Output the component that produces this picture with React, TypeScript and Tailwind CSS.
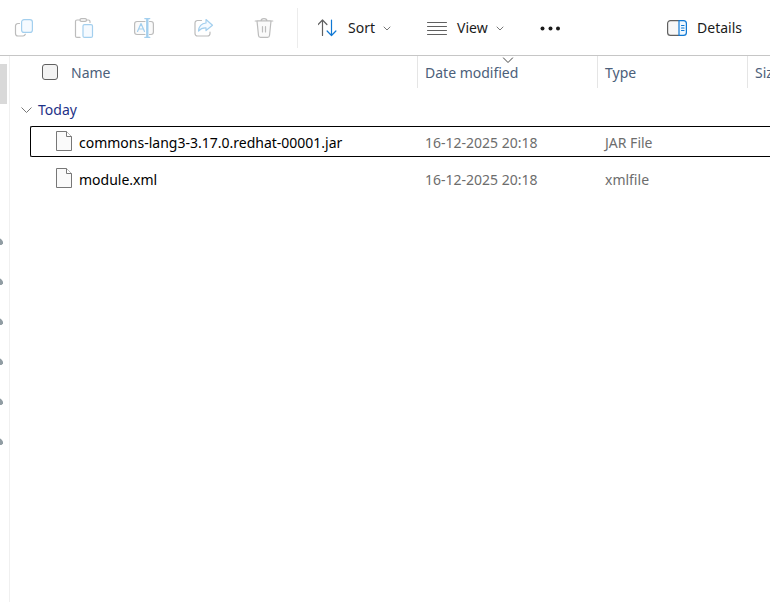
import type { ReactNode } from "react";

const rows = [
  { name: "commons-lang3-3.17.0.redhat-00001.jar", date: "16-12-2025 20:18", type: "JAR File", focused: true },
  { name: "module.xml", date: "16-12-2025 20:18", type: "xmlfile", focused: false },
];

const pins = [1, 2, 3, 4, 5, 6];

function Icon({ children }: { children: ReactNode }) {
  return (
    <svg width="20" height="20" viewBox="0 0 20 20" fill="none" strokeWidth="1.2" strokeLinecap="round" strokeLinejoin="round" className="shrink-0" aria-hidden="true">
      {children}
    </svg>
  );
}

function Chevron({ className }: { className: string }) {
  return (
    <svg width="8" height="5" viewBox="0 0 8 5" fill="none" stroke="currentColor" strokeLinecap="round" className={className} aria-hidden="true">
      <path d="M1 1l3 3 3-3" />
    </svg>
  );
}

function WideChevron({ className }: { className: string }) {
  return (
    <svg width="11" height="6" viewBox="0 0 11 6" fill="none" stroke="currentColor" className={className} aria-hidden="true">
      <path d="M.5 .5l5 5 5-5" />
    </svg>
  );
}

function ToolButton({ label, children }: { label: string; children: ReactNode }) {
  return (
    <button type="button" aria-label={label} disabled className="flex h-8 w-8 items-center justify-center">
      <Icon>{children}</Icon>
    </button>
  );
}

function Toolbar() {
  return (
    <header className="flex h-14 items-center border-b border-[#c6c6c6] pl-2 pr-7 pt-px text-[#1b1b1b]">
      <div className="flex shrink-0 gap-7">
        <ToolButton label="Copy">
          <path stroke="#bcbcbc" d="M5.500 5.500H4a2.500 2.500 0 0 0-2.500 2.500v7.500A2.500 2.500 0 0 0 4 18h5a2.500 2.500 0 0 0 2.300-1.700" />
          <rect stroke="#a3cfee" fill="#f5faff" x="7.600" y="1.600" width="10.800" height="12.800" rx="2.500" />
        </ToolButton>
        <ToolButton label="Paste">
          <path stroke="#bcbcbc" d="M6 19.400H3A1.500 1.500 0 0 1 1.500 17.900V3.500A1.500 1.500 0 0 1 3 2h3M12.500 2h2A1.500 1.500 0 0 1 16 3.500v1" />
          <rect stroke="#bcbcbc" x="6" y="0.700" width="6.500" height="2.600" rx="1.300" />
          <rect stroke="#a3cfee" fill="#f5faff" x="9" y="6.600" width="9.500" height="12.800" rx="1.500" />
        </ToolButton>
        <ToolButton label="Rename">
          <path stroke="#bcbcbc" fill="#fafafa" d="M11 3.500H3A2.500 2.500 0 0 0 .6 6v8A2.500 2.500 0 0 0 3 16.500h8M15.500 3.500H17A2.500 2.500 0 0 1 19.400 6v8a2.500 2.500 0 0 1-2.400 2.500h-1.500" />
          <path stroke="#a3cfee" d="M3.500 13.500L7 5.500l3.500 8M4.700 11h4.600M10.800.600h5M10.800 19.400h5M12.700.600v18.800M13.900.600v18.800" />
        </ToolButton>
        <ToolButton label="Share">
          <path stroke="#bcbcbc" d="M7.500 2.500H3.500A2.500 2.500 0 0 0 1 5v10.500a2.500 2.500 0 0 0 2.500 2.500h10A2.500 2.500 0 0 0 16 15.500V14" />
          <path stroke="#a3cfee" fill="#f5faff" d="M12 1.500l6.500 5.700L12 12.500V9.800c-3.200-.2-5.500.8-7.500 3.200.4-4.800 3-7.600 7.500-8z" />
        </ToolButton>
        <ToolButton label="Delete">
          <path stroke="#bcbcbc" d="M1.200 3h17.600M7 3a3 2.300 0 0 1 6 0" />
          <path stroke="#bcbcbc" fill="#fafafa" d="M3 3l1.500 14.500A2 2 0 0 0 6.500 19.400h7a2 2 0 0 0 2-1.900L17 3z" />
          <path stroke="#bcbcbc" d="M8.500 8.500v5.500M11.500 8.500v5.500" />
        </ToolButton>
      </div>
      <div className="ml-[17px] h-10 w-px shrink-0 bg-[#ececec]" />
      <button type="button" className="ml-5 flex shrink-0 items-center">
        <Icon>
          <path stroke="#606060" d="M4.500 17.500v-15M.1 6.500L4.500 2l4.400 4.500" />
          <path stroke="#0f78d4" d="M13.500 2v15M9.100 13l4.400 4.500 4.400-4.500" />
        </Icon>
        <span className="ml-2.5">Sort</span>
        <Chevron className="ml-2 text-[#777777]" />
      </button>
      <button type="button" className="ml-9 flex shrink-0 items-center">
        <Icon>
          <path stroke="#606060" strokeWidth="1" d="M.5 4.500h19M.5 8.500h19M.5 12.500h19M.5 16.500h19" />
        </Icon>
        <span className="ml-2.5">View</span>
        <Chevron className="ml-2 text-[#777777]" />
      </button>
      <button type="button" aria-label="See more" className="ml-9 flex shrink-0 items-center">
        <Icon>
          <g fill="#1b1b1b">
            <circle cx="2.500" cy="10.500" r="2" />
            <circle cx="10.500" cy="10.500" r="2" />
            <circle cx="18" cy="10.500" r="2" />
          </g>
        </Icon>
      </button>
      <button type="button" className="ml-auto flex shrink-0 items-center gap-2.5">
        <Icon>
          <path stroke="#606060" fill="#f7f7f7" d="M12 2.600H3.500A2.900 2.900 0 0 0 .6 5.500v9a2.900 2.900 0 0 0 2.900 2.900H12" />
          <path stroke="#0f78d4" fill="#eff8ff" d="M12 2.600h4.500a2.900 2.900 0 0 1 2.900 2.900v9a2.900 2.900 0 0 1-2.900 2.900H12z" />
          <path stroke="#0f78d4" d="M14.500 7.500h2.500M14.500 10h2.500M14.500 12.500h2.500" />
        </Icon>
        <span>Details</span>
      </button>
    </header>
  );
}

function FileIcon() {
  return (
    <svg width="18" height="22" viewBox="0 -1 18 22" fill="#fafafa" stroke="#777777" className="shrink-0 self-start" aria-hidden="true">
      <path d="M1.500 1.500h10l5 5v14h-15z" />
      <path d="M11.500 1.500v5h5" fill="#ffffff" />
    </svg>
  );
}

export default function App() {
  return (
    <div className="flex min-h-screen flex-col overflow-hidden bg-white font-['Noto_Sans','Open_Sans',sans-serif] text-[14px] leading-5">
      <Toolbar />
      <div className="flex grow">
        <aside className="w-2.5 shrink-0 overflow-hidden border-r border-[#f0f0f0] pt-2">
          <div className="h-10 w-[7px] bg-[#d9d9d9]" />
          <div className="mt-[118px] flex flex-col">
            {pins.map((pin) => (
              <div key={pin} className="flex h-10 items-center">
                <svg width="4" height="8" viewBox="0 0 4 8" fill="#919da3" aria-hidden="true">
                  <path d="M0 .5l1 .5 2 2.500v2L1.500 7H0z" />
                </svg>
              </div>
            ))}
          </div>
        </aside>
        <main className="min-w-0 grow overflow-hidden">
          <table className="block">
            <thead className="block">
              <tr className="grid h-8 grid-cols-[408px_180px_150px_1fr] text-left text-[#4c607a] *:font-normal">
                <th className="flex items-center gap-[13px] border-r border-[#e5e5e5] pl-8">
                  <input type="checkbox" aria-label="Select all" className="h-4 w-4 appearance-none rounded-[3px] border border-[#606060] bg-[#f3f3f3]" />
                  <span className="pt-0.5">Name</span>
                </th>
                <th className="relative flex items-center border-r border-[#e5e5e5] pl-[7px] pt-0.5">
                  <WideChevron className="absolute left-1/2 top-px -translate-x-1/2 text-[#444444]" />
                  Date modified
                </th>
                <th className="flex items-center border-r border-[#e5e5e5] pl-[7px] pt-0.5">Type</th>
                <th className="flex items-center pl-[7px] pt-0.5">Size</th>
              </tr>
            </thead>
            <tbody className="block pt-2">
              <tr className="block">
                <th className="block text-left font-normal">
                  <button type="button" className="flex h-7 items-center gap-1.5 pl-[11px] text-[#1e3287]">
                    <WideChevron className="text-[#777777]" />
                    Today
                  </button>
                </th>
              </tr>
              {rows.map((row) => (
                <tr
                  key={row.name}
                  className={`mb-1.5 ml-5 grid h-[31px] grid-cols-[387px_180px_150px_1fr] rounded-l-[2px] border border-r-0 text-[#6d6d6d] ${row.focused ? "mt-0.5 border-black" : "border-transparent"}`}
                >
                  <td className="flex items-center gap-1.5 pl-6 pt-0.5 text-black">
                    <FileIcon />
                    {row.name}
                  </td>
                  <td className="flex items-center pl-[7px] pt-0.5">{row.date}</td>
                  <td className="flex items-center pl-[7px] pt-0.5">{row.type}</td>
                  <td />
                </tr>
              ))}
            </tbody>
          </table>
        </main>
      </div>
    </div>
  );
}
